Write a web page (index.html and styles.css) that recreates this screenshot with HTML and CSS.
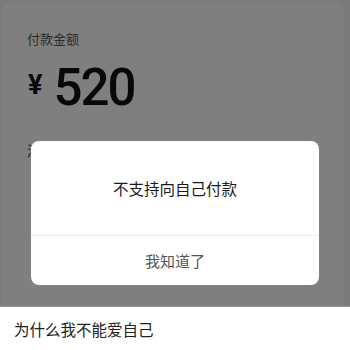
FILE: index.html
```html
<!DOCTYPE html>
<html lang="zh-CN">
<head>
    <meta charset="UTF-8">
    <meta name="viewport" content="width=device-width, initial-scale=1.0">
    <title>付款</title>
    <link rel="stylesheet" href="styles.css">
</head>
<body>
    <div class="page">
        <div class="pay">
            <div class="card">
                <div class="label">付款金额</div>
                <div class="amount">
                    <span class="currency">¥</span>
                    <span class="value">520</span>
                </div>
                <div class="remark">添加付款说明</div>
            </div>

            <div class="mask"></div>

            <div class="dialog" role="alertdialog" aria-label="提示">
                <div class="dialog-body">不支持向自己付款</div>
                <button type="button" class="dialog-btn">我知道了</button>
            </div>
        </div>

        <div class="caption">为什么我不能爱自己</div>
    </div>
</body>
</html>
```

FILE: styles.css
```css
body {
    margin: 0;
    font-family: "Noto Sans CJK SC", "Noto Sans", sans-serif;
    background-color: #fff;
}
.page {
    width: 350px;
    height: 350px;
    display: flex;
    flex-direction: column;
    overflow: hidden;
}
.pay {
    position: relative;
    flex: 1;
    background-color: #f6f6f6;
    padding: 3px 6px 0 1px;
}
.card {
    background-color: #fff;
    border-radius: 10px 10px 0 0;
    height: 100%;
    padding: 27px 0 0 26px;
    box-sizing: border-box;
}
.label {
    font-size: 13px;
    line-height: 18px;
    color: #555;
}
.amount {
    display: flex;
    align-items: flex-start;
    margin-top: 14px;
    color: #111;
}
.currency {
    font-family: Roboto, sans-serif;
    font-size: 27px;
    font-weight: 700;
    line-height: 30px;
    margin: 8px 11px 0 1px;
}
.value {
    font-family: Roboto, sans-serif;
    font-size: 51px;
    font-weight: 500;
    line-height: 52px;
    letter-spacing: -2px;
}
.remark {
    margin-top: 26px;
    font-size: 14px;
    color: #444;
}
.mask {
    position: absolute;
    inset: 0;
    background-color: rgba(0, 0, 0, 0.5);
}
.dialog {
    position: absolute;
    left: 31px;
    top: 141px;
    width: 288px;
    height: 144px;
    background-color: #fff;
    border-radius: 8px;
    display: flex;
    flex-direction: column;
    overflow: hidden;
}
.dialog-body {
    height: 94px;
    display: flex;
    align-items: center;
    justify-content: center;
    font-size: 15.5px;
    color: #1a1a1a;
    border-bottom: 1px solid #eee;
}
.dialog-btn {
    flex: 1;
    border: none;
    background: none;
    font-family: inherit;
    font-size: 15px;
    color: #555;
    padding: 0;
}
.caption {
    height: 44px;
    display: flex;
    align-items: center;
    padding-left: 14px;
    font-size: 15.5px;
    color: #222;
    background-color: #fff;
    border-top: 1px solid #9a9a9a;
    box-sizing: border-box;
}
```
